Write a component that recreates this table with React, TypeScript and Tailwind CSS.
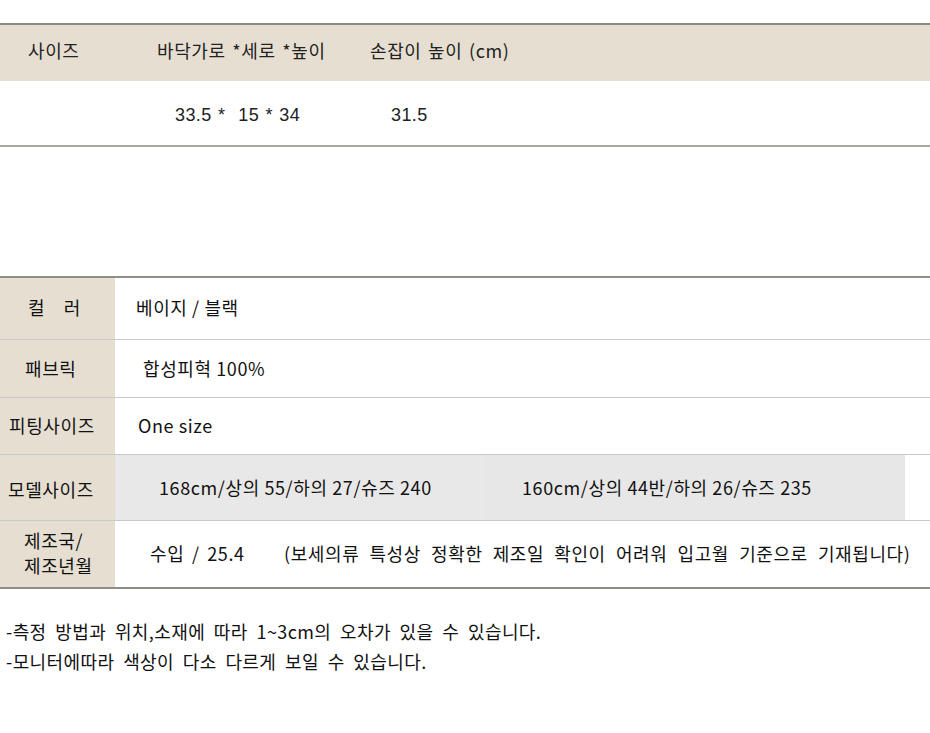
import React from "react";

const font = { fontFamily: '"Noto Sans CJK KR", "Noto Sans", sans-serif' };

export default function App() {
  return (
    <div className="w-[930px] h-[733px] bg-white text-[#222] overflow-hidden" style={font}>
      {/* top table */}
      <div className="pt-[23px]">
        <div className="border-t-2 border-b-2 border-t-[#8c8b82] border-b-[#a7a69a]">
          <div className="flex h-[56px] items-center bg-[#e6dfd1] pb-[6px] text-[18px] leading-none tracking-[0.6px] [word-spacing:2px]">
            <div className="w-[157px] pl-[28px]">사이즈</div>
            <div className="w-[213px]">바닥가로 *세로 *높이</div>
            <div>손잡이 높이 (cm)</div>
          </div>
          <div className="flex h-[64px] items-center pt-[4px] text-[18px] leading-none tracking-[0.4px] [word-spacing:1px]" style={{ fontFamily: '"Liberation Sans", sans-serif' }}>
            <div className="w-[175px]" />
            <div className="w-[216px] whitespace-pre">33.5 *  15 * 34</div>
            <div>31.5</div>
          </div>
        </div>
      </div>

      {/* second table */}
      <div className="mt-[129px] border-t-2 border-b-2 border-[#8e8d86] text-[18px] text-[#111] leading-none tracking-[0.6px]">
        <div className="flex h-[62px] border-b border-[#c9c9c6]">
          <div className="w-[115px] bg-[#e6dfd1] flex items-center pl-[28px] pb-[4px] whitespace-pre">컬    러</div>
          <div className="flex-1 flex items-center pl-[21px] pb-[4px]">베이지 / 블랙</div>
        </div>
        <div className="flex h-[58px] border-b border-[#c9c9c6]">
          <div className="w-[115px] bg-[#e6dfd1] flex items-center pl-[25px] pb-[2px]">패브릭</div>
          <div className="flex-1 flex items-center pl-[28px] pb-[2px]">합성피혁 100%</div>
        </div>
        <div className="flex h-[57px] border-b border-[#c9c9c6]">
          <div className="w-[115px] bg-[#e6dfd1] flex items-center pl-[9px] pb-[2px]">피팅사이즈</div>
          <div className="flex-1 flex items-center pl-[23px] pb-[2px]">One size</div>
        </div>
        <div className="flex h-[66px] border-b border-[#c9c9c6]">
          <div className="w-[115px] bg-[#e6dfd1] flex items-center pl-[8px] pt-[2px]">모델사이즈</div>
          <div className="w-[370px] bg-[#e8e8e8] flex items-center pl-[44px] pb-[2px]">168cm/상의 55/하의 27/슈즈 240</div>
          <div className="w-[420px] bg-[#e7e7e7] flex items-center pl-[37px] pb-[2px]">160cm/상의 44반/하의 26/슈즈 235</div>
          <div className="flex-1" />
        </div>
        <div className="flex h-[66px]">
          <div className="w-[115px] bg-[#e6dfd1] flex flex-col justify-center items-start pl-[24px] leading-[25px] pb-[2px]">
            <div>제조국/</div>
            <div>제조년월</div>
          </div>
          <div className="flex-1 flex items-center pl-[35px] pb-[2px] whitespace-pre">
            <span className="w-[134px] [word-spacing:3px]">수입 / 25.4</span>
            <span className="[word-spacing:5.5px]">(보세의류 특성상 정확한 제조일 확인이 어려워 입고월 기준으로 기재됩니다)</span>
          </div>
        </div>
      </div>

      {/* notes */}
      <div className="pt-[27px] pl-[6px] text-[18px] text-[#111] leading-[30px] tracking-[0.4px] [word-spacing:4.3px]">
        <div>-측정 방법과 위치,소재에 따라 1~3cm의 오차가 있을 수 있습니다.</div>
        <div>-모니터에따라 색상이 다소 다르게 보일 수 있습니다.</div>
      </div>
    </div>
  );
}
